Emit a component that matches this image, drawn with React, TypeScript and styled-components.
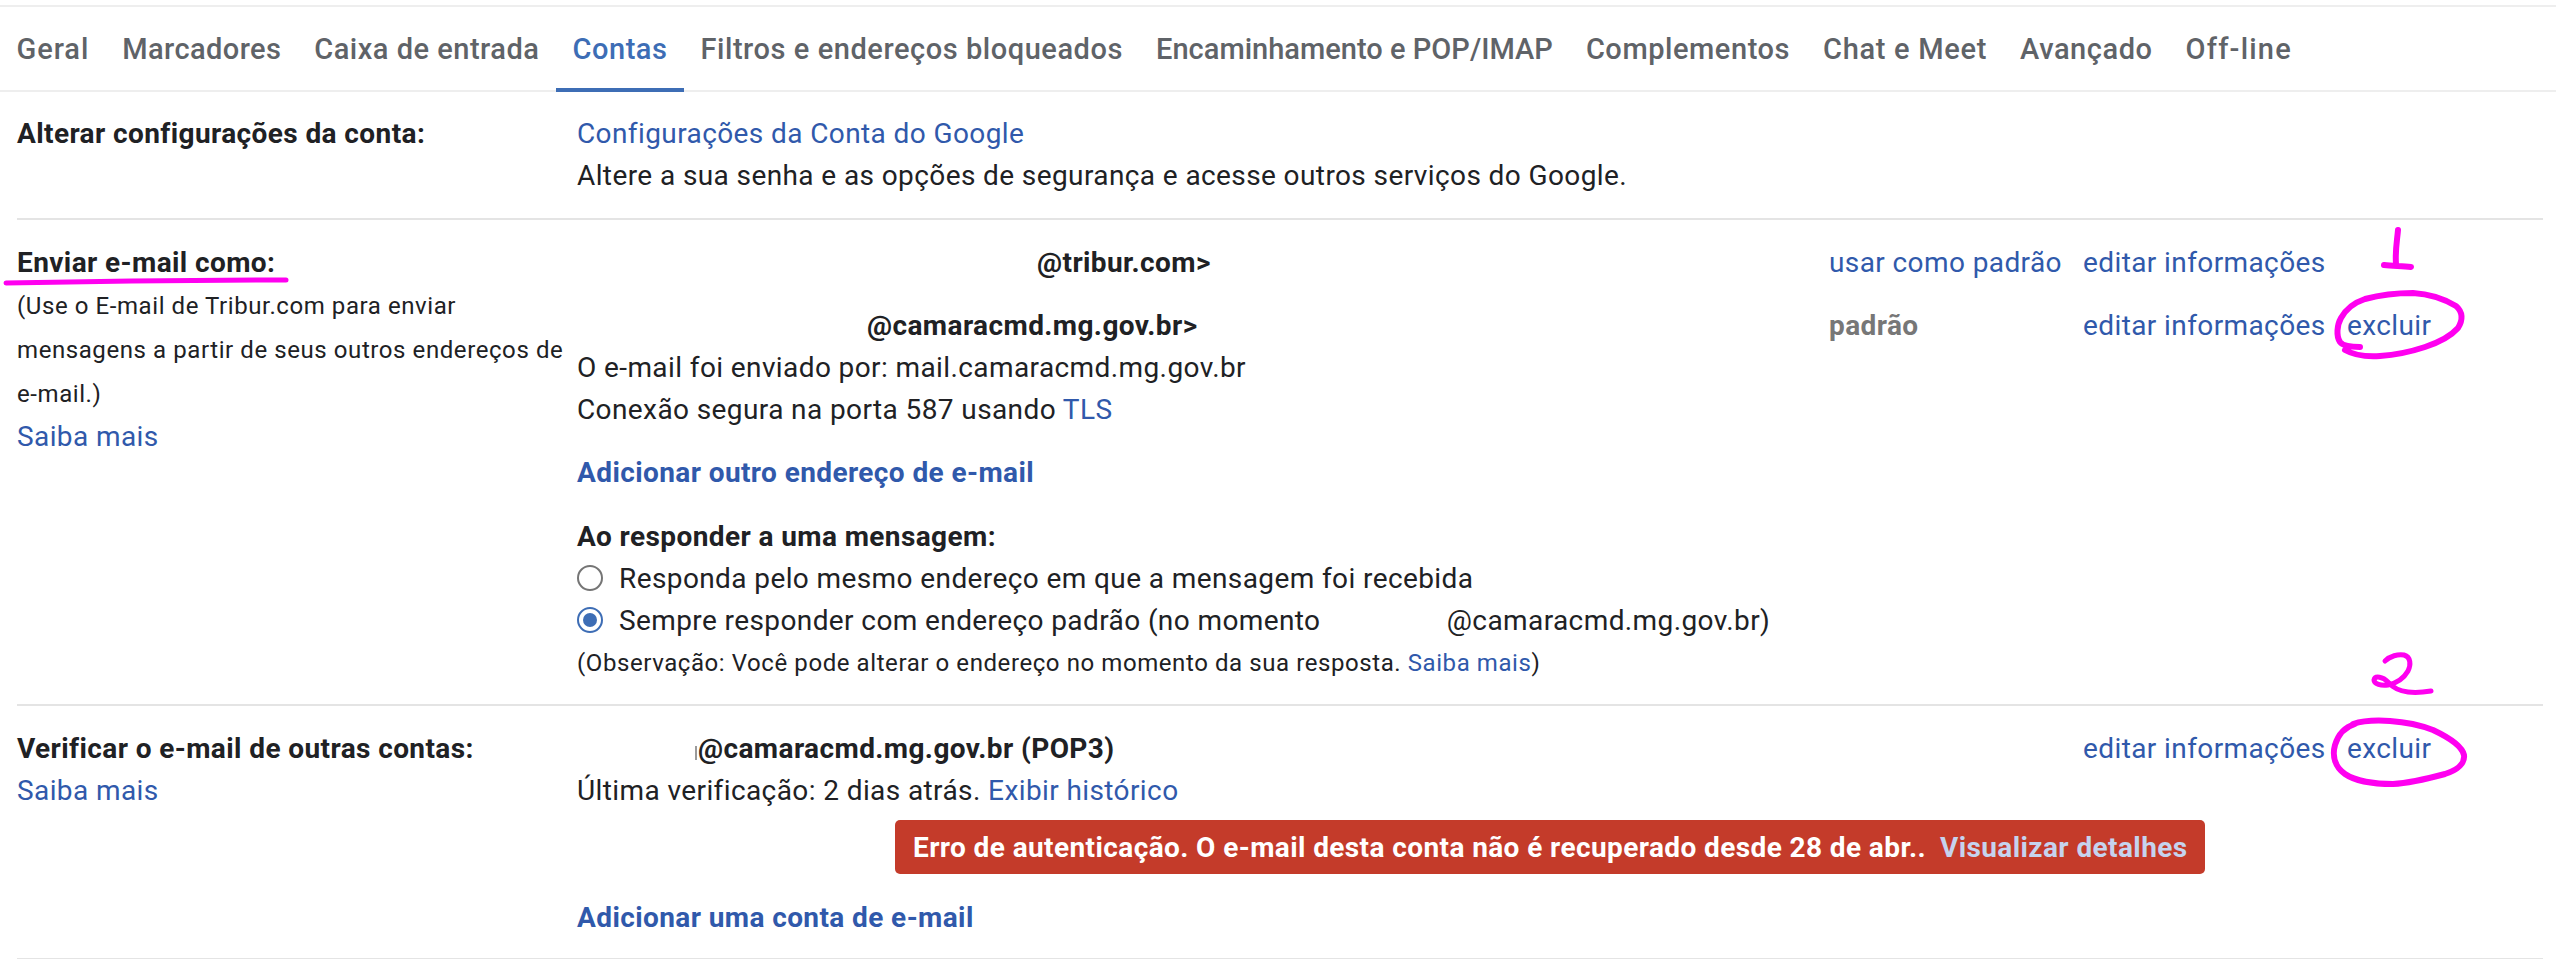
import React from "react";
import styled, { createGlobalStyle } from "styled-components";

const Global = createGlobalStyle`
  html, body { margin: 0; padding: 0; background: #fff; }
  body { font-family: Roboto, "Liberation Sans", sans-serif; color: #202124; overflow: hidden; letter-spacing: 0.4px; }
`;

const Page = styled.div`
  position: relative;
  width: 2556px;
  height: 959px;
  padding-top: 5px;
  box-sizing: border-box;
  overflow: hidden;
`;

const Tabs = styled.nav`
  display: flex;
  height: 83px;
  border-top: 2px solid #eeeeee;
  border-bottom: 2px solid #eeeeee;
`;

const Tab = styled.div<{ $active?: boolean; $track: number }>`
  position: relative;
  padding: 0 16.5px;
  line-height: 85px;
  font-size: 29px;
  font-weight: 500;
  letter-spacing: ${(p) => p.$track}px;
  white-space: nowrap;
  color: ${(p) => (p.$active ? "#3d6db5" : "#5f6368")};
  ${(p) =>
    p.$active &&
    `&::after { content: ""; position: absolute; left: 0; right: 0; bottom: -2px; height: 4px; background: #3d6db5; }`}
`;

const Section = styled.section<{ $h: number; $top: number }>`
  display: grid;
  grid-template-columns: 560px 1fr;
  height: ${(p) => p.$h}px;
  box-sizing: border-box;
  margin: 0 13px 0 17px;
  padding-top: ${(p) => p.$top}px;
  border-bottom: 2px solid #e4e4e4;
`;

const Side = styled.div`
  display: flex;
  flex-direction: column;
`;

const Main = styled.div`
  display: flex;
  flex-direction: column;
  min-width: 0;
`;

const Heading = styled.div<{ $mt?: number }>`
  font-size: 28px;
  font-weight: 700;
  line-height: 42px;
  margin-top: ${(p) => p.$mt ?? 0}px;
  white-space: nowrap;
`;

const Line = styled.div<{ $mt?: number }>`
  font-size: 28px;
  line-height: 42px;
  margin-top: ${(p) => p.$mt ?? 0}px;
  white-space: nowrap;
`;

const Hint = styled.div`
  font-size: 24px;
  letter-spacing: 0.58px;
  line-height: 44px;
  white-space: nowrap;
`;

const Note = styled.div`
  font-size: 24px;
  letter-spacing: 0.58px;
  line-height: 42px;
  white-space: nowrap;
`;

const Link = styled.a<{ $bold?: boolean }>`
  color: #3059ab;
  text-decoration: none;
  font-weight: ${(p) => (p.$bold ? 700 : 400)};
`;

const Contact = styled.div<{ $mt?: number }>`
  display: grid;
  grid-template-columns: 1252px 254px 264px 1fr;
  font-size: 28px;
  line-height: 42px;
  height: 42px;
  margin-top: ${(p) => p.$mt ?? 0}px;
  white-space: nowrap;
`;

const Address = styled.div<{ $indent: number }>`
  font-weight: 700;
  padding-left: ${(p) => p.$indent}px;
`;

const Status = styled.span`
  font-weight: 700;
  color: #777777;
`;

const Redacted = styled.span`
  display: inline-block;
  width: 119px;
`;

const EraseMark = styled.span`
  display: inline-block;
  width: 2px;
  height: 14px;
  margin-right: 1px;
  vertical-align: -2px;
  background: #9a9a9a;
`;

const RadioGroup = styled.div`
  display: flex;
  flex-direction: column;
  margin: -1px 0 1px;
`;

const RadioRow = styled.label`
  display: flex;
  align-items: center;
  gap: 16px;
  height: 42px;
  font-size: 28px;
  white-space: nowrap;
`;

const RadioDot = styled.span<{ $on?: boolean }>`
  box-sizing: border-box;
  display: flex;
  align-items: center;
  justify-content: center;
  width: 26px;
  height: 26px;
  border-radius: 50%;
  border: 2px solid ${(p) => (p.$on ? "#3d6db5" : "#757575")};
  &::after {
    content: "";
    display: ${(p) => (p.$on ? "block" : "none")};
    width: 14px;
    height: 14px;
    border-radius: 50%;
    background: #3d6db5;
  }
`;

const Banner = styled.div`
  align-self: flex-start;
  margin: 8px 0 0 318px;
  height: 54px;
  width: 1310px;
  box-sizing: border-box;
  padding-left: 18px;
  display: flex;
  align-items: center;
  background: #c43b2a;
  border-radius: 5px;
  color: #fff;
  font-size: 28px;
  font-weight: 700;
  white-space: nowrap;
`;

const BannerLink = styled.span`
  color: #c6d3ee;
  margin-left: 14px;
`;

const Ink = styled.svg`
  position: absolute;
  left: 0;
  top: 0;
  pointer-events: none;
`;

const tabs: { label: string; track: number }[] = [
  { label: "Geral", track: 0.95 },
  { label: "Marcadores", track: 0.4 },
  { label: "Caixa de entrada", track: 0.5 },
  { label: "Contas", track: 0.55 },
  { label: "Filtros e endereços bloqueados", track: 0.55 },
  { label: "Encaminhamento e POP/IMAP", track: 0.02 },
  { label: "Complementos", track: 0.55 },
  { label: "Chat e Meet", track: 0.7 },
  { label: "Avançado", track: 0.55 },
  { label: "Off-line", track: 1.2 },
];

export default function App() {
  return (
    <Page>
      <Global />
      <Tabs>
        {tabs.map((t) => (
          <Tab key={t.label} $track={t.track} $active={t.label === "Contas"}>
            {t.label}
          </Tab>
        ))}
      </Tabs>

      <Section $h={128} $top={21}>
        <Side>
          <Heading>Alterar configurações da conta:</Heading>
        </Side>
        <Main>
          <Line>
            <Link>Configurações da Conta do Google</Link>
          </Line>
          <Line>Altere a sua senha e as opções de segurança e acesse outros serviços do Google.</Line>
        </Main>
      </Section>

      <Section $h={486} $top={22}>
        <Side>
          <Heading>Enviar e-mail como:</Heading>
          <Hint>(Use o E-mail de Tribur.com para enviar</Hint>
          <Hint>mensagens a partir de seus outros endereços de</Hint>
          <Hint>e-mail.)</Hint>
          <Line>
            <Link>Saiba mais</Link>
          </Line>
        </Side>
        <Main>
          <Contact>
            <Address $indent={460}>@tribur.com&gt;</Address>
            <Link>usar como padrão</Link>
            <Link>editar informações</Link>
            <span />
          </Contact>
          <Contact $mt={21}>
            <Address $indent={290}>@camaracmd.mg.gov.br&gt;</Address>
            <Status>padrão</Status>
            <Link>editar informações</Link>
            <Link>excluir</Link>
          </Contact>
          <Line>O e-mail foi enviado por: mail.camaracmd.mg.gov.br</Line>
          <Line>
            Conexão segura na porta 587 usando <Link>TLS</Link>
          </Line>
          <Line $mt={21}>
            <Link $bold>Adicionar outro endereço de e-mail</Link>
          </Line>
          <Heading $mt={22}>Ao responder a uma mensagem:</Heading>
          <RadioGroup>
            <RadioRow>
              <RadioDot />
              Responda pelo mesmo endereço em que a mensagem foi recebida
            </RadioRow>
            <RadioRow>
              <RadioDot $on />
              <span>
                Sempre responder com endereço padrão (no momento <Redacted />
                @camaracmd.mg.gov.br)
              </span>
            </RadioRow>
          </RadioGroup>
          <Note>
            (Observação: Você pode alterar o endereço no momento da sua resposta. <Link>Saiba mais</Link>)
          </Note>
        </Main>
      </Section>

      <Section $h={254} $top={22}>
        <Side>
          <Heading>Verificar o e-mail de outras contas:</Heading>
          <Line>
            <Link>Saiba mais</Link>
          </Line>
        </Side>
        <Main>
          <Contact>
            <Address $indent={118}>
              <EraseMark />@camaracmd.mg.gov.br (POP3)
            </Address>
            <span />
            <Link>editar informações</Link>
            <Link>excluir</Link>
          </Contact>
          <Line>
            Última verificação: 2 dias atrás. <Link>Exibir histórico</Link>
          </Line>
          <Banner>
            Erro de autenticação. O e-mail desta conta não é recuperado desde 28 de abr..
            <BannerLink>Visualizar detalhes</BannerLink>
          </Banner>
          <Line $mt={23}>
            <Link $bold>Adicionar uma conta de e-mail</Link>
          </Line>
        </Main>
      </Section>

      <Ink width="2556" height="959" viewBox="0 0 2556 959" fill="none" stroke="#ff00f0" strokeWidth="6" strokeLinecap="round" strokeLinejoin="round">
        <path strokeWidth="5" d="M6 283 C100 281 200 280 286 280" />
        <path d="M2398 230 C2397 242 2395 250 2396 264 M2384 265 C2393 266 2402 266 2411 267" />
        <path d="M2360 347 C2350 347 2343 346 2340 342 C2336 336 2337 325 2341 318 C2346 309 2353 303 2365 299 C2380 295 2398 293 2413 293 C2430 294 2446 300 2456 306 C2463 312 2463 320 2458 328 C2450 337 2440 342 2425 347 C2410 352 2395 355 2380 356 C2365 357 2352 354 2345 350" />
        <path strokeWidth="5" d="M2385 661 C2390 656 2398 654 2404 655 C2411 657 2411 665 2408 671 C2404 678 2397 683 2388 685 C2381 686 2374 684 2374 680 C2375 675 2383 677 2388 682 C2393 688 2400 691 2408 692 C2416 693 2425 692 2431 691" />
        <path d="M2355 724 C2345 727 2338 735 2335 745 C2332 756 2335 767 2345 774 C2355 781 2375 784 2393 784 C2410 783 2430 778 2445 774 C2458 770 2465 763 2464 755 C2462 746 2450 738 2433 730 C2420 725 2405 722 2390 721 C2375 720 2362 721 2353 724" />
      </Ink>
    </Page>
  );
}
